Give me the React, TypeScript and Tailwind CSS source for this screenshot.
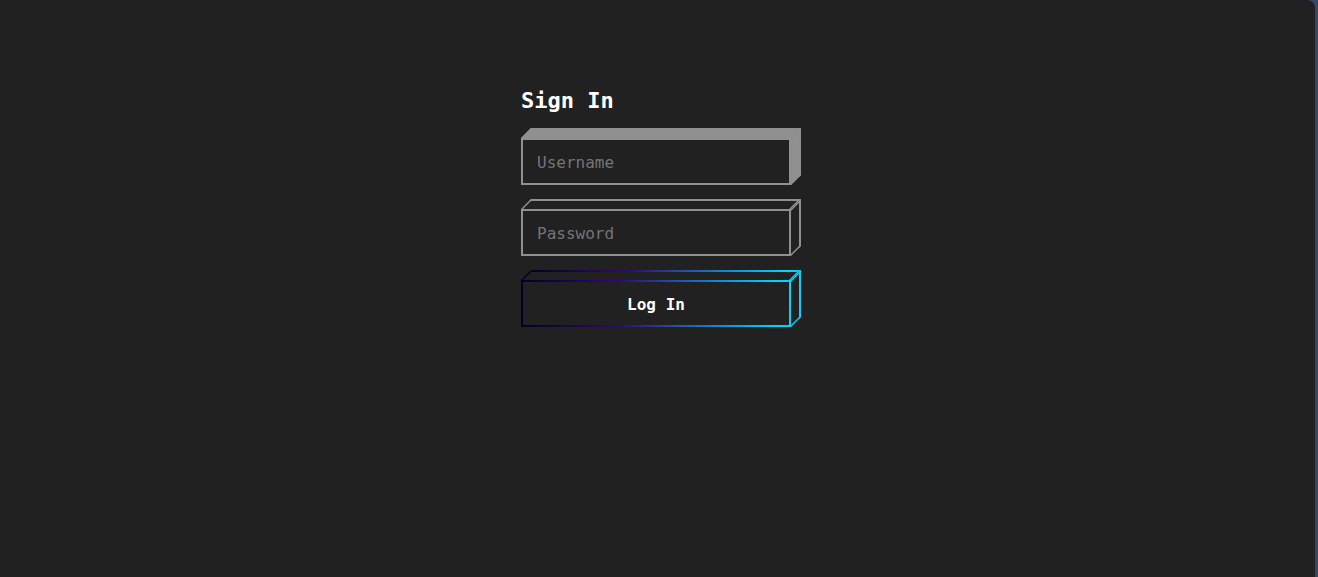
import type { ReactNode } from "react";

type Face = { top: string; side: string; front: string };

const gradient =
  "[border-image:linear-gradient(90deg,#020024_0%,#340979_37%,#00d4ff_94%)_2]";

const solid: Face = {
  top: "border-[#909090] bg-[#909090]",
  side: "border-[#909090] bg-[#909090]",
  front: "border-[#909090]",
};

const outline: Face = {
  top: "border-[#909090]",
  side: "border-[#909090]",
  front: "border-[#909090]",
};

const neon: Face = {
  top: gradient,
  side: "border-[#00d4ff]",
  front: gradient,
};

function Block({ face, children }: { face: Face; children: ReactNode }) {
  return (
    <div className={`relative flex h-[47px] border-2 ${face.front}`}>
      <span
        aria-hidden="true"
        className={`pointer-events-none absolute -top-3 -left-0.5 h-2.5 w-[270px] origin-bottom-left -skew-x-[45deg] border-2 border-b-0 ${face.top}`}
      />
      <span
        aria-hidden="true"
        className={`pointer-events-none absolute -top-0.5 -right-3 h-[47px] w-2.5 origin-top-left -skew-y-[45deg] border-2 border-l-0 ${face.side}`}
      />
      {children}
    </div>
  );
}

const field =
  "w-full bg-transparent px-3.5 pt-0.5 text-base text-white outline-none placeholder:text-[#757575]";

export default function App() {
  return (
    <div className="min-h-screen bg-[#354a68] pr-[3px] font-['DejaVu_Sans_Mono',monospace]">
      <main className="flex min-h-screen justify-center rounded-tr-lg bg-[#212121] pt-[84px] pr-[3px]">
        <form
          className="flex w-[270px] flex-col gap-6"
          onSubmit={(event) => event.preventDefault()}
        >
          <h1 className="h-[30px] text-[22px] leading-[34px] font-bold text-white">
            Sign In
          </h1>
          <Block face={solid}>
            <input
              type="text"
              aria-label="Username"
              placeholder="Username"
              className={field}
            />
          </Block>
          <Block face={outline}>
            <input
              type="password"
              aria-label="Password"
              placeholder="Password"
              className={field}
            />
          </Block>
          <Block face={neon}>
            <button
              type="submit"
              className="w-full cursor-pointer pt-0.5 text-base font-bold text-white"
            >
              Log In
            </button>
          </Block>
        </form>
      </main>
    </div>
  );
}
